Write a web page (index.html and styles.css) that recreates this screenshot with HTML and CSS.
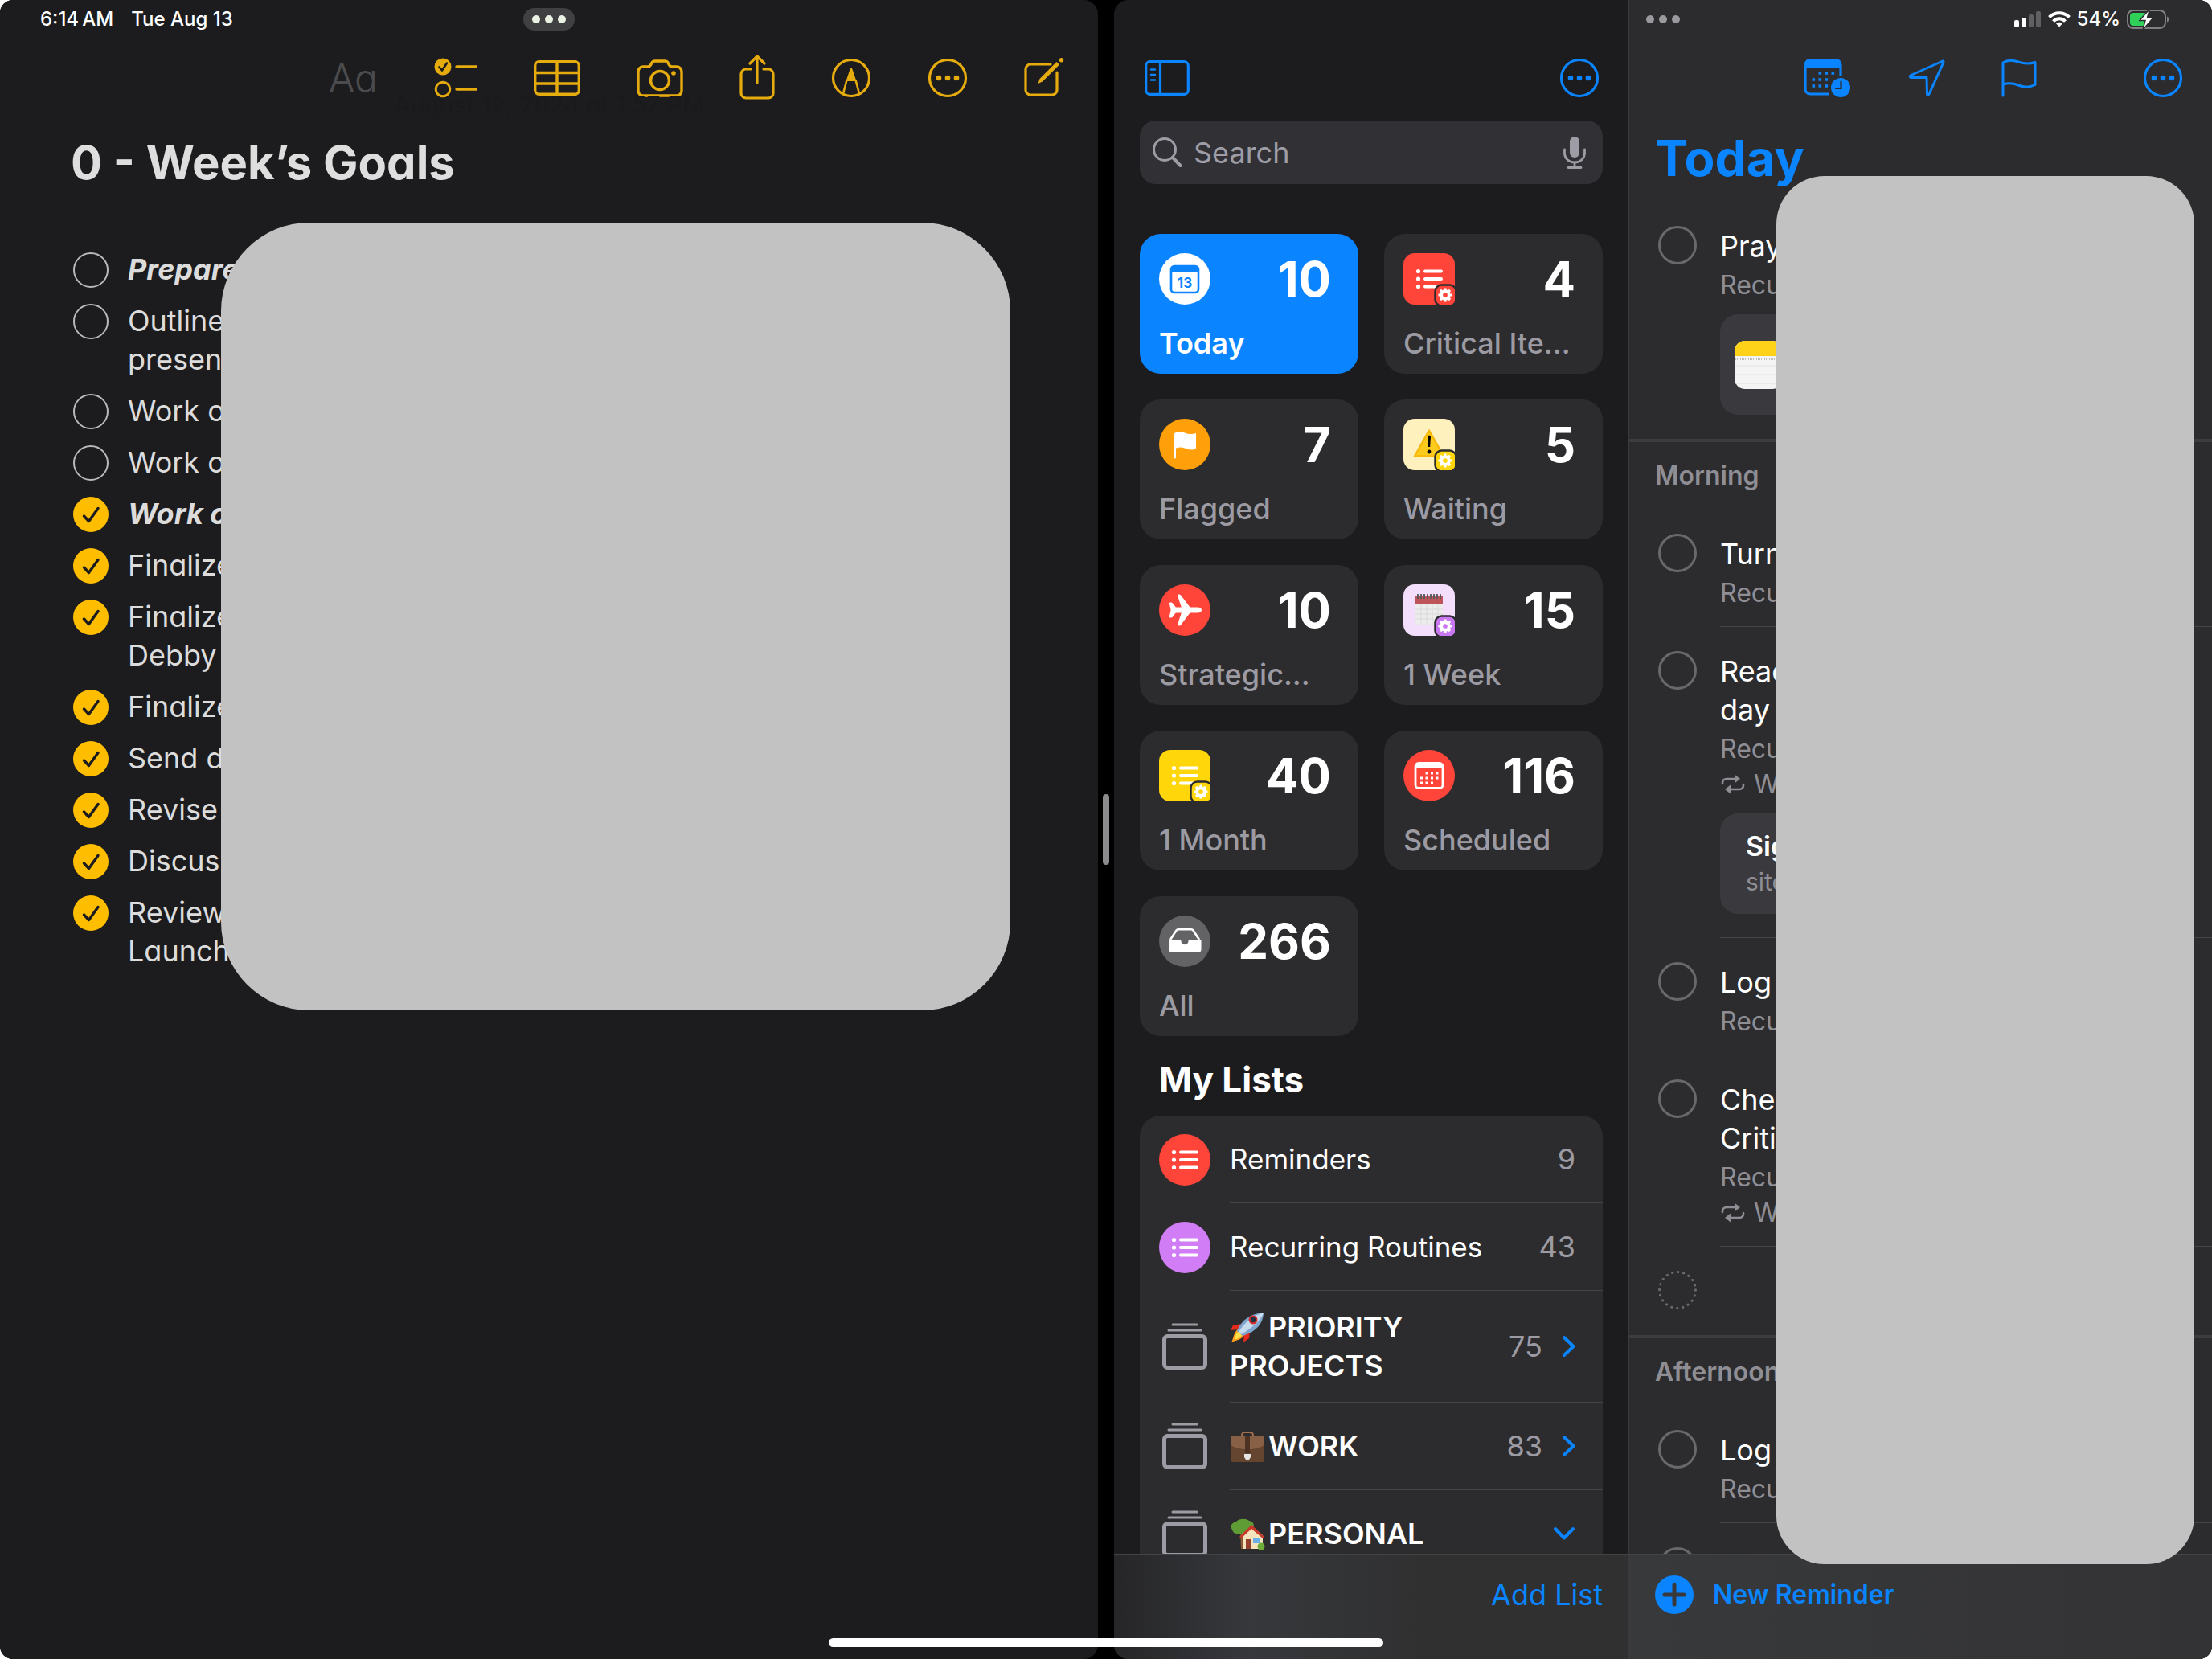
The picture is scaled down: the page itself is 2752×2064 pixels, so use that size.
FILE: index.html
```html
<!DOCTYPE html>
<html lang="en">

<head>
    <meta charset="utf-8">
    <title>Notes and Reminders</title>
    <link rel="stylesheet" href="styles.css">
</head>

<body>
    <!-- shared icons -->
    <svg class="defs" aria-hidden="true">
        <symbol id="more" viewBox="0 0 50 50">
            <circle cx="25" cy="25" r="22.5" fill="none" stroke="currentColor" stroke-width="3.2" />
            <g fill="currentColor"><circle cx="14" cy="25" r="3.3" /><circle cx="25" cy="25" r="3.3" /><circle cx="36" cy="25" r="3.3" /></g>
        </symbol>
        <symbol id="bullets" viewBox="0 0 64 64">
            <g fill="#fff"><circle cx="18.5" cy="22.5" r="2.6" /><circle cx="18.5" cy="32" r="2.6" /><circle cx="18.5" cy="41.5" r="2.6" /></g>
            <path d="M27 22.5h20M27 32h20M27 41.5h20" stroke="#fff" stroke-width="4" stroke-linecap="round" />
        </symbol>
        <symbol id="gear" viewBox="0 0 20 20">
            <circle cx="10" cy="10" r="5" fill="none" stroke="#fff" stroke-width="4" />
            <path d="M10 1v18M1 10h18M3.6 3.6l12.8 12.8M16.4 3.6L3.6 16.4" stroke="#fff" stroke-width="3.4" stroke-dasharray="3.4 11.2 3.4" />
        </symbol>
        <symbol id="stack" viewBox="0 0 64 64">
            <g fill="none" stroke="#9d9ca4" stroke-linecap="round"><path d="M17 4h30M12 11h40" stroke-width="3" />
            <rect x="6.5" y="18.5" width="51" height="39" rx="4" stroke-width="5" /></g>
        </symbol>
        <symbol id="repeat" viewBox="0 0 30 26">
            <path d="M2 12v-1c0-3 2-5 5-5h12M28 13v1c0 3-2 5-5 5H10" fill="none" stroke="#8f8e95" stroke-width="2.6" stroke-linecap="round" />
            <path d="M17 .5v11L24 6zM12 13.5v11L5 19z" fill="#8f8e95" />
        </symbol>
        <symbol id="chevron" viewBox="0 0 18 28">
            <path d="M3 3l11.5 11L3 25" fill="none" stroke="#0a84ff" stroke-width="4" stroke-linecap="round" stroke-linejoin="round" />
        </symbol>
    </svg>

    <div class="screen">
        <main class="notes">
            <header class="status">
                <div class="clock"><span>6:14&thinsp;AM</span><span>Tue Aug 13</span></div>
                <button class="dots pill" aria-label="Window options"><i></i><i></i><i></i></button>
            </header>
            <nav class="toolbar yellow">
                <button class="format" disabled>Aa</button>
                <button aria-label="Checklist">
                    <svg width="54" height="50" viewBox="0 0 54 50">
                        <circle cx="11" cy="11" r="10.5" fill="currentColor" />
                        <path d="M6.5 11.5l3.5 4 6-9" fill="none" stroke="#1c1c1e" stroke-width="2.6" stroke-linecap="round" stroke-linejoin="round" />
                        <circle cx="11" cy="39" r="8.8" fill="none" stroke="currentColor" stroke-width="3" />
                        <path d="M28 11h25M28 39h25" stroke="currentColor" stroke-width="3.4" stroke-linecap="round" />
                    </svg>
                </button>
                <button aria-label="Table">
                    <svg width="58" height="44" viewBox="0 0 58 44" fill="none" stroke="currentColor" stroke-width="3.4">
                        <rect x="1.7" y="1.7" width="54.6" height="40.6" rx="5" />
                        <path d="M29 2v40M2 15.5h54M2 29h54" />
                    </svg>
                </button>
                <button aria-label="Camera">
                    <svg width="58" height="48" viewBox="0 0 58 48" fill="none" stroke="currentColor" stroke-width="3.4">
                        <path d="M8 10h6c2 0 3-1 4-3l1-2c1-2 2-2 4-2h12c2 0 3 0 4 2l1 2c1 2 2 3 4 3h6a6 6 0 0 1 6 6v24a6 6 0 0 1-6 6H8a6 6 0 0 1-6-6V16a6 6 0 0 1 6-6z" />
                        <circle cx="29" cy="27" r="11.5" />
                        <circle cx="46" cy="18" r="2.8" fill="currentColor" stroke="none" />
                    </svg>
                </button>
                <button aria-label="Share">
                    <svg width="44" height="60" viewBox="0 0 44 60" fill="none" stroke="currentColor" stroke-width="3.2" stroke-linecap="round" stroke-linejoin="round">
                        <path d="M14 19H8a6 6 0 0 0-6 6v24a6 6 0 0 0 6 6h28a6 6 0 0 0 6-6V25a6 6 0 0 0-6-6h-6M22 3v33M13 12l9-9 9 9" />
                    </svg>
                </button>
                <button aria-label="Markup">
                    <svg width="50" height="50" viewBox="0 0 50 50" fill="none" stroke="currentColor" stroke-width="3.2">
                        <circle cx="25" cy="25" r="22.5" />
                        <path d="M25 13c1 0 1.3.6 1.6 1.4L31.5 29h-13l4.9-14.6c.3-.8.6-1.4 1.6-1.4z" fill="currentColor" stroke="none" />
                        <path d="M19.5 27.5l-4.5 17M30.5 27.5l4.5 17" stroke-width="2.6" />
                    </svg>
                </button>
                <button aria-label="More"><svg width="50" height="50"><use href="#more" /></svg></button>
                <button aria-label="New note">
                    <svg width="50" height="52" viewBox="0 0 50 52">
                        <path d="M33 9H8a6 6 0 0 0-6 6v26a6 6 0 0 0 6 6h27a6 6 0 0 0 6-6V19" fill="none" stroke="currentColor" stroke-width="3.2" stroke-linecap="round" />
                        <path d="M17.5 33l2-6L40.5 6l3.5 3.5-21 21z" fill="currentColor" />
                        <circle cx="46.5" cy="3.8" r="2.7" fill="currentColor" />
                    </svg>
                </button>
            </nav>
            <p class="note-date">August 12, 2024 at 1:57 PM</p>
            <h1>0 - Week’s Goals</h1>
            <ul class="checklist">
                <li><input type="checkbox" id="g1"><label for="g1" class="strong">Prepare</label></li>
                <li><input type="checkbox" id="g2"><label for="g2">Outline<br>present</label></li>
                <li><input type="checkbox" id="g3"><label for="g3">Work o</label></li>
                <li><input type="checkbox" id="g4"><label for="g4">Work o</label></li>
                <li><input type="checkbox" id="g5" checked><label for="g5" class="strong">Work o</label></li>
                <li><input type="checkbox" id="g6" checked><label for="g6">Finalize</label></li>
                <li><input type="checkbox" id="g7" checked><label for="g7">Finalize<br>Debby</label></li>
                <li><input type="checkbox" id="g8" checked><label for="g8">Finalize</label></li>
                <li><input type="checkbox" id="g9" checked><label for="g9">Send d</label></li>
                <li><input type="checkbox" id="g10" checked><label for="g10">Revise</label></li>
                <li><input type="checkbox" id="g11" checked><label for="g11">Discuss</label></li>
                <li><input type="checkbox" id="g12" checked><label for="g12">Review<br>Launch</label></li>
            </ul>
            <div class="cover cover-notes"></div>
        </main>

        <div class="divider"><span class="grip"></span></div>

        <div class="reminders">
            <aside class="sidebar">
                <nav class="toolbar blue spread">
                    <button aria-label="Toggle sidebar">
                        <svg width="56" height="44" viewBox="0 0 56 44" fill="none" stroke="currentColor" stroke-width="3.2" stroke-linecap="round">
                            <rect x="1.7" y="1.7" width="52.6" height="40.6" rx="5" />
                            <path d="M19.5 2v40" />
                            <path d="M8 11.5h5M8 18h5M8 24.5h5" stroke-width="2.4" />
                        </svg>
                    </button>
                    <button aria-label="More"><svg width="50" height="50"><use href="#more" /></svg></button>
                </nav>
                <div class="search">
                    <svg width="38" height="40" viewBox="0 0 38 40" fill="none" stroke="#9e9da5" stroke-linecap="round">
                        <circle cx="16" cy="16" r="13.5" stroke-width="3" /><path d="M26 26l9.5 10" stroke-width="4" />
                    </svg>
                    <input type="search" placeholder="Search" aria-label="Search">
                    <svg width="30" height="42" viewBox="0 0 30 42" fill="none" stroke="#9e9da5" stroke-linecap="round">
                        <rect x="9" y="1" width="12" height="26" rx="6" fill="#9e9da5" stroke="none" />
                        <path d="M2.5 17v4c0 16 25 16 25 0v-4M15 33v6M7 39.5h16" stroke-width="2.8" />
                    </svg>
                </div>
                <div class="lists">
                    <div class="cards">
                        <a href="#" class="card active">
                            <svg class="icon" viewBox="0 0 64 64">
                                <circle cx="32" cy="32" r="32" fill="#fff" />
                                <rect x="15" y="16" width="34" height="33" rx="4" fill="none" stroke="#0a84ff" stroke-width="2.6" />
                                <path d="M15 24v-4a4 4 0 0 1 4-4h26a4 4 0 0 1 4 4v4z" fill="#0a84ff" />
                                <text x="32" y="43" text-anchor="middle" class="day">13</text>
                            </svg>
                            <span class="count">10</span><span class="name">Today</span>
                        </a>
                        <a href="#" class="card">
                            <svg class="icon" viewBox="0 0 64 64">
                                <rect width="64" height="64" rx="14" fill="#ff453a" /><use href="#bullets" />
                                <rect x="39.5" y="39.5" width="26" height="26" rx="8" fill="#ff453a" stroke="#2c2c2e" stroke-width="2.5" />
                                <use href="#gear" x="42.5" y="42.5" width="19" height="19" />
                            </svg>
                            <span class="count">4</span><span class="name">Critical Ite...</span>
                        </a>
                        <a href="#" class="card">
                            <svg class="icon" viewBox="0 0 64 64">
                                <circle cx="32" cy="32" r="32" fill="#ff9f0a" />
                                <path d="M18 48V19c4-4 9-3.500 14-1.500s9 2 14 .5v19c-5 2.500-9 1.500-14-.5-4-1.500-7-1.200-11 0V48a1.500 1.500 0 0 1-3 0z" fill="#fff" />
                            </svg>
                            <span class="count">7</span><span class="name">Flagged</span>
                        </a>
                        <a href="#" class="card">
                            <svg class="icon" viewBox="0 0 64 64">
                                <rect width="64" height="64" rx="14" fill="#fff1bd" />
                                <path d="M32 14.5L50 46.500H14z" fill="#fdcb1b" stroke="#f8b90c" stroke-width="2.5" stroke-linejoin="round" />
                                <path d="M30 22.5c0-2.500 4-2.500 4 0l-.8 12.500h-2.400z" /><circle cx="32" cy="41" r="2.4" />
                                <rect x="39.5" y="39.5" width="26" height="26" rx="8" fill="#ffd60a" stroke="#2c2c2e" stroke-width="2.5" />
                                <use href="#gear" x="42.5" y="42.5" width="19" height="19" />
                            </svg>
                            <span class="count">5</span><span class="name">Waiting</span>
                        </a>
                        <a href="#" class="card">
                            <svg class="icon" viewBox="0 0 64 64">
                                <circle cx="32" cy="32" r="32" fill="#ff453a" />
                                <path d="M53 32c0 2.300-2.500 3.500-5.500 3.500h-9L27.500 50c-.8 1-1.500 1.500-2.700 1.500-1.600 0-2-1-1.500-2.500l4.500-13.500h-7L17 40.500c-.8 1-1.600 1-2.600 1-1.400 0-1.700-1-1.400-2l1.600-7.500-1.600-7.500c-.3-1 0-2 1.400-2 1 0 1.800 0 2.600 1l3.800 5h7L23.300 15c-.5-1.500-.1-2.500 1.500-2.500 1.200 0 1.900.5 2.700 1.500l11 14.500h9c3 0 5.500 1.200 5.500 3.500z" fill="#fff" />
                            </svg>
                            <span class="count">10</span><span class="name">Strategic...</span>
                        </a>
                        <a href="#" class="card">
                            <svg class="icon" viewBox="0 0 64 64">
                                <rect width="64" height="64" rx="14" fill="#f3defc" />
                                <path d="M15 16h34v22L40 50H15z" fill="#ececec" /><path d="M15 15h34v9H15z" fill="#bd5457" />
                                <path d="M15 31h34M15 37h34M15 43h28M22 25v25M29 25v25M36 25v25M43 25v18" stroke="#d9d9d9" />
                                <path d="M49 36c-1 6-5 5-7 6-1 4-1 6-4 8z" fill="#c9c9c9" />
                                <path d="M18 12v6M22 12v6M26 12v6M30 12v6M34 12v6M38 12v6M42 12v6M46 12v6" stroke="#56585c" stroke-width="1.8" />
                                <rect x="39.5" y="39.5" width="26" height="26" rx="8" fill="#ca78f2" stroke="#2c2c2e" stroke-width="2.5" />
                                <use href="#gear" x="42.5" y="42.5" width="19" height="19" />
                            </svg>
                            <span class="count">15</span><span class="name">1 Week</span>
                        </a>
                        <a href="#" class="card">
                            <svg class="icon" viewBox="0 0 64 64">
                                <rect width="64" height="64" rx="14" fill="#ffd60a" /><use href="#bullets" />
                                <rect x="39.5" y="39.5" width="26" height="26" rx="8" fill="#ffd60a" stroke="#2c2c2e" stroke-width="2.5" />
                                <use href="#gear" x="42.5" y="42.5" width="19" height="19" />
                            </svg>
                            <span class="count">40</span><span class="name">1 Month</span>
                        </a>
                        <a href="#" class="card">
                            <svg class="icon" viewBox="0 0 64 64">
                                <circle cx="32" cy="32" r="32" fill="#ff453a" />
                                <rect x="15" y="16.5" width="34" height="31" rx="4" fill="none" stroke="#fff" stroke-width="2.8" />
                                <path d="M15 23v-3a4 4 0 0 1 4-4h26a4 4 0 0 1 4 4v3z" fill="#fff" />
                                <path d="M27.5 29h3M34 29h3M40.500 29h3M21 35h3M27.500 35h3M34 35h3M40.500 35h3M21 41h3M27.500 41h3M34 41h3" stroke="#fff" stroke-width="3" />
                            </svg>
                            <span class="count">116</span><span class="name">Scheduled</span>
                        </a>
                        <a href="#" class="card">
                            <svg class="icon" viewBox="0 0 64 64">
                                <circle cx="32" cy="32" r="32" fill="#636366" />
                                <path d="M14 30l7.500-11.500c.6-1 1.200-1.300 2.500-1.300h16c1.300 0 1.900.3 2.500 1.300L50 30" fill="none" stroke="#fff" stroke-width="2.6" />
                                <path d="M12.500 30H26c1.200 0 1.500.8 1.500 2 0 5.500 9 5.500 9 0 0-1.200.3-2 1.500-2h14.500v12a4 4 0 0 1-4 4h-32a4 4 0 0 1-4-4z" fill="#fff" />
                            </svg>
                            <span class="count">266</span><span class="name">All</span>
                        </a>
                    </div>
                    <h2>My Lists</h2>
                    <ul class="my-lists">
                        <li>
                            <svg class="icon" viewBox="0 0 64 64"><circle cx="32" cy="32" r="32" fill="#ff453a" /><use href="#bullets" /></svg>
                            <a href="#" class="row"><span class="title">Reminders</span><span class="num">9</span></a>
                        </li>
                        <li>
                            <svg class="icon" viewBox="0 0 64 64"><circle cx="32" cy="32" r="32" fill="#d17df5" /><use href="#bullets" /></svg>
                            <a href="#" class="row"><span class="title">Recurring Routines</span><span class="num">43</span></a>
                        </li>
                        <li class="group">
                            <svg class="icon"><use href="#stack" /></svg>
                            <a href="#" class="row"><span class="title"><svg class="emoji" viewBox="0 0 44 40">
                                        <path d="M14 15L4 17l-3 6 9-1zM25 24l-1 9-7 5 1-12z" fill="#e8291c" />
                                        <path d="M10 22c-5 3-5 10-8 16 6-3 13-3 16-9z" fill="#ff9d1e" /><path d="M10 25c-3 3-3 6-4 10 4-2 7-2 9-6z" fill="#ffe14a" />
                                        <path d="M9 24C14 10 27 2 42 1c0 13-9 24-26 29z" fill="#7fa6cf" /><path d="M11 25C18 14 28 5 42 1c-1 6-13 19-28 27z" fill="#c7dced" />
                                        <circle cx="29" cy="10" r="5.5" fill="#d32d2d" /><circle cx="29" cy="10" r="3.3" fill="#22303f" />
                                    </svg>PRIORITY PROJECTS</span><span class="num">75</span><svg class="chev"><use href="#chevron" /></svg></a>
                        </li>
                        <li class="group">
                            <svg class="icon"><use href="#stack" /></svg>
                            <a href="#" class="row"><span class="title"><svg class="emoji" viewBox="0 0 44 40">
                                        <path d="M15 6c0-5 3-4 7-4s7-1 7 4" fill="none" stroke="#a5714c" stroke-width="2" />
                                        <rect x="1" y="6" width="42" height="33" rx="3" fill="#65452f" /><path d="M1 9a3 3 0 0 1 3-3h36a3 3 0 0 1 3 3v8c-6 8-36 8-42 0z" fill="#886046" />
                                        <path d="M19 6h6v22h-6z" fill="#4d3223" /><path d="M18 29h8v4l-2 3h-4l-2-3z" fill="#e4e4e4" />
                                    </svg>WORK</span><span class="num">83</span><svg class="chev"><use href="#chevron" /></svg></a>
                        </li>
                        <li class="group">
                            <svg class="icon"><use href="#stack" /></svg>
                            <a href="#" class="row"><span class="title"><svg class="emoji" viewBox="0 0 44 40">
                                        <path d="M13 17h6v21h-5z" fill="#8a5a35" />
                                        <path d="M3 14c-4-5 1-9 5-10 4-4 12-4 16-1 6 1 8 7 3 10-2 6-8 7-12 6-5 2-11 0-12-5z" fill="#5f9c35" />
                                        <path d="M16 20L28 10l13 11v17H16z" fill="#f4e3bd" /><path d="M12 23L27 8l16 15-2 2-14-12-13 12z" fill="#c8392c" />
                                        <path d="M20 26h6v12h-6z" fill="#94402c" /><path d="M29 24h8v7h-8z" fill="#6ab0e6" />
                                        <circle cx="39" cy="35" r="4.5" fill="#6dac38" />
                                    </svg>PERSONAL</span><svg class="chev open"><use href="#chevron" /></svg></a>
                        </li>
                    </ul>
                </div>
                <footer class="bar bar-side"><button class="add">Add List</button></footer>
            </aside>

            <section class="detail">
                <header class="status">
                    <button class="dots" aria-label="Window options"><i></i><i></i><i></i></button>
                    <div class="system">
                        <svg width="34" height="22" viewBox="0 0 34 22">
                            <rect x="0" y="12" width="6" height="9" rx="2" fill="#fff" /><rect x="9" y="9" width="6" height="12" rx="2" fill="#fff" />
                            <rect x="18" y="5" width="6" height="16" rx="2" fill="#606063" /><rect x="27" y="1" width="6" height="20" rx="2" fill="#606063" />
                        </svg>
                        <svg width="28" height="22" viewBox="0 0 28 22" fill="none" stroke="#fff" stroke-width="4">
                            <path d="M1.5 8.500c7-7 18-7 25 0M6.500 13.500c4-4.300 11-4.300 15 0" /><path d="M14 20.500l-4-4.200c2.200-2 5.800-2 8 0z" fill="#fff" stroke="none" />
                        </svg>
                        <span>54%</span>
                        <svg width="54" height="26" viewBox="0 0 54 26">
                            <rect x="1" y="2" width="47" height="22" rx="7" fill="none" stroke="#808083" stroke-width="2" />
                            <path d="M50 9.500c3 1 3 6 0 7z" fill="#808083" /><rect x="4" y="5" width="22" height="16" rx="4" fill="#30d158" />
                            <path d="M28.500 0L16 14.500h7L20 26l13-15h-7.500z" fill="#fff" stroke="#2c2c2e" stroke-width="1.5" />
                        </svg>
                    </div>
                </header>
                <nav class="toolbar blue">
                    <button aria-label="Schedule">
                        <svg width="60" height="50" viewBox="0 0 60 50">
                            <path d="M46 22V9a6 6 0 0 0-6-6H8a6 6 0 0 0-6 6v30a6 6 0 0 0 6 6h24" fill="none" stroke="currentColor" stroke-width="3.2" />
                            <path d="M1 13V8a7 7 0 0 1 7-7h32a7 7 0 0 1 7 7v5z" fill="currentColor" />
                            <path d="M18.500 19h3.600M26.500 19h3.600M34.500 19h3.600M10.500 27h3.600M18.500 27h3.600M26.500 27h3.600M10.500 35h3.600M18.500 35h3.600M26.500 35h3.600" stroke="currentColor" stroke-width="3.6" />
                            <circle cx="46" cy="37" r="12" fill="currentColor" /><path d="M46.500 29.500v8.500H40" fill="none" stroke="#2c2c2e" stroke-width="2.2" stroke-linecap="round" />
                        </svg>
                    </button>
                    <button aria-label="Location">
                        <svg width="46" height="48" viewBox="0 0 46 48" fill="none" stroke="currentColor" stroke-width="3" stroke-linejoin="round">
                            <path d="M43 3L3.500 20.500c-2 1-1.500 3 .5 3H23l.5 20c0 2 2 2 2.700.3L44 4.500c.3-1-.2-1.800-1-1.500z" />
                        </svg>
                    </button>
                    <button aria-label="Flag">
                        <svg width="44" height="48" viewBox="0 0 44 48" fill="none" stroke="currentColor" stroke-width="3" stroke-linecap="round" stroke-linejoin="round">
                            <path d="M2 46V5c6-4 12-3.500 19-1s13 3 21 .5v28c-8 4-15 3-21 .5s-13-3-19-1" />
                        </svg>
                    </button>
                    <button class="last" aria-label="More"><svg width="50" height="50"><use href="#more" /></svg></button>
                </nav>
                <h1>Today</h1>
                <div class="tasks">
                    <ul>
                        <li><input type="checkbox" id="t1">
                            <div class="task"><label for="t1">Pray</label><p>Recurring</p>
                                <div class="attach"><svg width="60" height="60" viewBox="0 0 60 60">
                                        <rect width="60" height="60" rx="13" fill="#f4f4f4" />
                                        <path d="M0 19v-6A13 13 0 0 1 13 0h34a13 13 0 0 1 13 13v6z" fill="#ffd21a" />
                                        <path d="M1 23h58" stroke="#bdbdbd" stroke-width="2" stroke-dasharray="1 1" /><path d="M0 31h60M0 42h60M0 53h60" stroke="#e2e2e2" />
                                    </svg></div>
                            </div>
                        </li>
                    </ul>
                    <h3>Morning</h3>
                    <ul>
                        <li><input type="checkbox" id="t2"><div class="task"><label for="t2">Turn</label><p>Recurring</p></div></li>
                        <li><input type="checkbox" id="t3">
                            <div class="task"><label for="t3">Read<br>day</label><p>Recurring</p>
                                <p class="repeat"><svg><use href="#repeat" /></svg>W</p>
                                <div class="attach link"><a href="#">Sign</a><span>site</span></div>
                            </div>
                        </li>
                        <li><input type="checkbox" id="t4"><div class="task"><label for="t4">Log</label><p>Recurring</p></div></li>
                        <li><input type="checkbox" id="t5">
                            <div class="task"><label for="t5">Chec<br>Critic</label><p>Recurring</p>
                                <p class="repeat"><svg><use href="#repeat" /></svg>W</p>
                            </div>
                        </li>
                        <li class="empty"><input type="checkbox" aria-label="New reminder in Morning"></li>
                    </ul>
                    <h3>Afternoon</h3>
                    <ul>
                        <li><input type="checkbox" id="t6"><div class="task"><label for="t6">Log</label><p>Recurring</p></div></li>
                        <li><input type="checkbox" aria-label="Reminder"></li>
                    </ul>
                </div>
                <footer class="bar bar-detail">
                    <button class="new">
                        <svg width="48" height="48" viewBox="0 0 48 48"><circle cx="24" cy="24" r="24" fill="#0a84ff" /><path d="M24 12v24M12 24h24" stroke="#38393b" stroke-width="5" stroke-linecap="round" /></svg>
                        New Reminder
                    </button>
                </footer>
                <div class="cover cover-detail"></div>
            </section>
        </div>
        <div class="home"></div>
    </div>
</body>

</html>
```

FILE: styles.css
```css
* {
    box-sizing: border-box;
}

body {
    margin: 0;
    background: #fff;
    color: #fff;
    font-family: Inter, "Liberation Sans", sans-serif;
    font-size: 36px;
    line-height: 48px;
}

h1, h2, h3, p, ul {
    margin: 0;
    padding: 0;
}

ul {
    list-style: none;
}

a {
    color: inherit;
    text-decoration: none;
}

button {
    padding: 0;
    border: none;
    background: none;
    color: inherit;
    font: inherit;
    cursor: pointer;
}

svg {
    display: block;
    flex: none;
}

.defs {
    position: absolute;
    width: 0;
    height: 0;
}

.screen {
    position: relative;
    display: grid;
    grid-template-columns: 1fr 20px 1fr;
    height: 100vh;
    overflow: hidden;
    background: #000;
    border-radius: 16px;
}

/* status bar and toolbars */
.status {
    display: flex;
    align-items: center;
    justify-content: space-between;
    height: 48px;
    font-size: 24px;
    font-weight: 500;
    line-height: 48px;
}

.dots {
    display: flex;
    align-items: center;
    gap: 6px;
    height: 28px;
}

.dots i {
    width: 10px;
    height: 10px;
    border-radius: 50%;
    background: #9a999e;
}

.pill {
    padding: 0 11px;
    border-radius: 14px;
    background: #404042;
}

.pill i {
    background: #e9f2e3;
}

.toolbar {
    display: flex;
    align-items: center;
    justify-content: flex-end;
    gap: 70px;
    height: 98px;
}

.yellow {
    color: #e6ac0e;
}

.blue {
    color: #0a84ff;
}

.spread {
    justify-content: space-between;
}

/* notes window */
.notes {
    position: relative;
    overflow: hidden;
    background: #1c1c1e;
    border-radius: 0 18px 18px 0;
    font-feature-settings: "cv11";
}

.notes .status {
    display: grid;
    grid-template-columns: 1fr auto 1fr;
}

.clock {
    display: flex;
    gap: 22px;
    padding-left: 50px;
}

.notes .toolbar {
    padding-right: 42px;
}

.format {
    color: #4b4b4d;
    font-size: 48px;
    font-weight: 300;
}

/* scrolled up under the toolbar, almost faded out */
.note-date {
    height: 48px;
    margin-top: -32px;
    color: #1a1a1c;
    font-size: 30px;
    line-height: 32px;
    text-align: center;
}

.notes h1 {
    padding-left: 88px;
    color: #dedede;
    font-size: 58px;
    line-height: 80px;
}

.checklist {
    display: flex;
    flex-direction: column;
    gap: 16px;
    padding: 69px 91px 0;
    color: #dcdcdc;
}

.checklist li {
    display: flex;
    align-items: flex-start;
    gap: 24px;
}

input[type="checkbox"] {
    flex: none;
    appearance: none;
    margin: 0;
    border-radius: 50%;
}

.checklist input {
    width: 44px;
    height: 44px;
    margin-top: 3px;
    border: 2px solid #b9b9bb;
}

.checklist input:checked {
    border: none;
    background: #ffbd00 url("data:image/svg+xml,%3Csvg xmlns='http://www.w3.org/2000/svg' viewBox='0 0 44 44'%3E%3Cpath d='M13.5 24l6 6.500L31 14.500' fill='none' stroke='%231c1c1e' stroke-width='3.400' stroke-linecap='round' stroke-linejoin='round'/%3E%3C/svg%3E");
}

.strong {
    font-style: italic;
    font-weight: 700;
}

/* blank sheets laid over private text */
.cover {
    position: absolute;
    background: #c2c2c2;
}

.cover-notes {
    top: 277px;
    left: 275px;
    right: 109px;
    height: 980px;
    border-radius: 110px;
}

.cover-detail {
    top: 219px;
    left: 183px;
    right: 22px;
    bottom: 118px;
    border-radius: 60px;
}

.divider {
    display: flex;
    align-items: center;
    justify-content: center;
}

.grip {
    width: 8px;
    height: 88px;
    border-radius: 4px;
    background: #8b8b8d;
}

/* reminders window */
.reminders {
    display: grid;
    grid-template-columns: 640px 1fr;
    min-height: 0;
    overflow: hidden;
    border-radius: 18px 0 0 18px;
}

.sidebar,
.detail {
    position: relative;
    display: flex;
    flex-direction: column;
    min-height: 0;
    background: #1c1c1e;
}

.sidebar .toolbar {
    margin-top: 48px;
    padding: 0 36px 0 38px;
}

.search {
    display: flex;
    align-items: center;
    gap: 14px;
    height: 79px;
    margin: 4px 32px 0;
    padding: 0 20px 0 15px;
    border-radius: 20px;
    background: #313035;
}

.search input {
    flex: 1;
    min-width: 0;
    padding: 0;
    border: none;
    outline: none;
    background: none;
    color: #fff;
    font: inherit;
}

.search input::placeholder {
    color: #9e9da5;
}

.lists {
    flex: 1;
    min-height: 0;
    overflow: hidden;
    padding: 62px 32px 0;
}

.cards {
    display: grid;
    grid-template-columns: 1fr 1fr;
    gap: 32px;
}

.card {
    display: grid;
    grid-template-columns: 64px 1fr;
    grid-template-rows: 64px 1fr;
    height: 174px;
    padding: 24px 34px 14px 24px;
    border-radius: 26px;
    background: #2c2c2e;
}

.card.active {
    background: #0a84ff;
}

.icon {
    width: 64px;
    height: 64px;
}

.day {
    fill: #0a84ff;
    font-size: 17px;
    font-weight: 700;
}

.count {
    font-size: 60px;
    font-weight: 700;
    line-height: 64px;
    text-align: right;
}

.name {
    grid-column: 1 / 3;
    align-self: end;
    color: #9c9ba3;
    font-weight: 500;
    white-space: nowrap;
}

.active .name {
    color: #fff;
    font-weight: 600;
}

.lists h2 {
    padding: 26px 24px 17px;
    font-size: 44px;
    line-height: 56px;
}

.my-lists {
    border-radius: 26px 26px 0 0;
    background: #2c2c2e;
}

.my-lists li {
    display: flex;
    align-items: center;
    gap: 24px;
    padding-left: 24px;
}

.row {
    display: flex;
    flex: 1;
    align-items: center;
    min-height: 109px;
    padding: 21px 34px 21px 0;
    border-bottom: 1px solid #444446;
}

.title {
    flex: 1;
    font-size: 35px;
}

.num {
    color: #9c9ba3;
}

.group .title {
    padding-right: 60px;
    font-size: 36px;
    font-weight: 600;
}

.emoji {
    display: inline-block;
    width: 44px;
    height: 40px;
    margin-right: 4px;
    vertical-align: -8px;
}

.chev {
    width: 18px;
    height: 28px;
    margin-left: 24px;
}

.group .row {
    padding-right: 33px;
}

.open {
    margin-right: 6px;
    transform: rotate(90deg);
}

/* bottom bars */
.bar {
    height: 131px;
    padding-top: 26px;
    border-top: 1px solid #434345;
    color: #0a84ff;
}

.bar-side {
    padding-right: 32px;
    background: linear-gradient(90deg, #262628, #36383b 26%, #303031 60%, #303031);
    text-align: right;
}

.bar-detail {
    padding-left: 32px;
    background: linear-gradient(90deg, #38393b, #333335);
}

.new {
    display: flex;
    align-items: center;
    gap: 24px;
    font-size: 32px;
    font-weight: 600;
}

/* today list */
.detail {
    background: #2c2c2e;
    border-left: 1px solid #3a3a3c;
}

.detail .status {
    padding: 0 52px 0 21px;
}

.system {
    display: flex;
    align-items: center;
    gap: 8px;
}

.detail .toolbar {
    padding-right: 36px;
}

.last {
    margin-left: 62px;
}

.detail h1 {
    height: 105px;
    padding: 11px 0 0 32px;
    color: #0a84ff;
    font-size: 62px;
    line-height: 80px;
}

.tasks {
    flex: 1;
    min-height: 0;
    overflow: hidden;
}

.tasks h3 {
    padding: 17px 32px;
    border-top: 4px solid #3c3c3e;
    color: #8f8e95;
    font-size: 32px;
    font-weight: 600;
    line-height: 50px;
}

.tasks li {
    display: flex;
    align-items: flex-start;
    gap: 29px;
    padding-left: 36px;
}

.tasks input {
    width: 48px;
    height: 48px;
    margin-top: 30px;
    border: 3px solid #69696c;
}

.task {
    flex: 1;
    padding: 31px 0 20px;
    border-bottom: 1px solid #434345;
}

.tasks ul:first-child .task {
    border-color: transparent;
}

.task label {
    display: block;
    margin-bottom: 3px;
}

.task p {
    color: #8f8e95;
    font-size: 32px;
    line-height: 43px;
}

.task .repeat {
    display: flex;
    align-items: center;
    gap: 10px;
    margin-top: 1px;
}

.repeat svg {
    width: 32px;
    height: 26px;
}

.attach {
    display: flex;
    align-items: center;
    height: 125px;
    margin: 15px 32px 9px 0;
    padding-left: 18px;
    border-radius: 22px;
    background: #3a393e;
}

.link {
    flex-direction: column;
    align-items: flex-start;
    justify-content: center;
    padding-left: 32px;
    font-size: 34px;
    font-weight: 600;
    line-height: 44px;
}

.link span {
    color: #8f8e95;
    font-size: 30px;
    font-weight: 400;
}

.empty {
    height: 110px;
}

.empty input {
    border: none;
    background: url("data:image/svg+xml,%3Csvg xmlns='http://www.w3.org/2000/svg' viewBox='0 0 48 48'%3E%3Ccircle cx='24' cy='24' r='22.500' fill='none' stroke='%2369696c' stroke-width='3.400' stroke-linecap='round' stroke-dasharray='0 7.069'/%3E%3C/svg%3E");
}

.home {
    position: absolute;
    bottom: 15px;
    left: 50%;
    width: 690px;
    height: 11px;
    margin-left: -345px;
    border-radius: 6px;
    background: #fff;
}
```
